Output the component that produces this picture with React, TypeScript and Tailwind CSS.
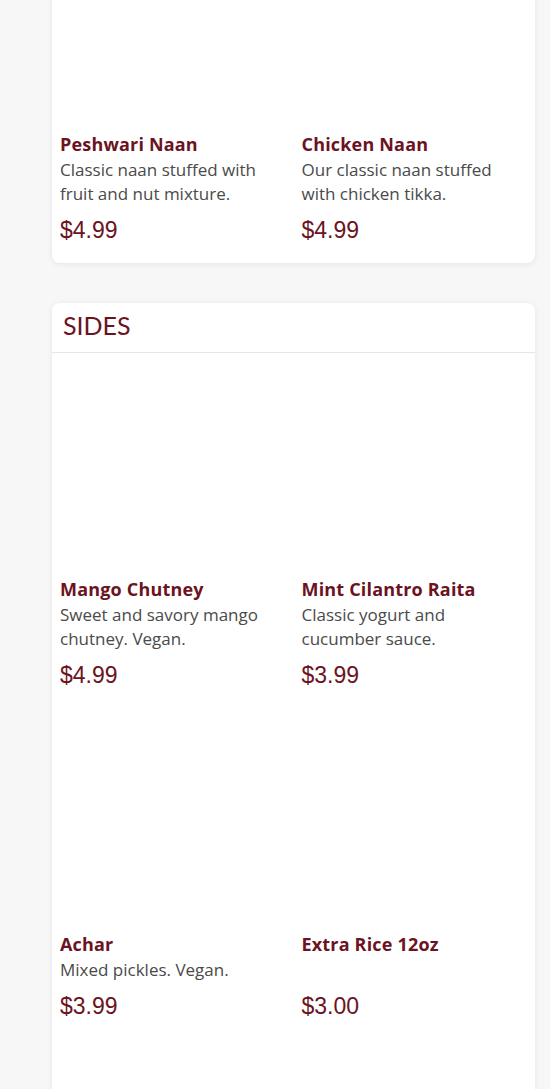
type MenuItem = {
    name: string;
    description?: string;
    price: string;
};

const breads: MenuItem[] = [
    { name: 'Peshwari Naan', description: 'Classic naan stuffed with fruit and nut mixture.', price: '$4.99' },
    { name: 'Chicken Naan', description: 'Our classic naan stuffed with chicken tikka.', price: '$4.99' },
];

const sides: MenuItem[] = [
    { name: 'Mango Chutney', description: 'Sweet and savory mango chutney. Vegan.', price: '$4.99' },
    { name: 'Mint Cilantro Raita', description: 'Classic yogurt and cucumber sauce.', price: '$3.99' },
    { name: 'Achar', description: 'Mixed pickles. Vegan.', price: '$3.99' },
    { name: 'Extra Rice 12oz', price: '$3.00' },
];

const ItemCard = ({ item }: { item: MenuItem }) => (
    <div className="px-2 pt-2 pb-4">
        <div className="h-[215px] bg-white" />
        <h3 className="text-[18px] leading-[27px] font-bold text-[#6b1322] tracking-[0.01em]">{item.name}</h3>
        <p className="min-h-6 pr-3 text-[17px] leading-6 text-[#4a4a4a]">{item.description}</p>
        <p className="mt-2 text-[23px] leading-[33px] text-[#6b1322] font-['Liberation_Sans',Arial,sans-serif]">
            {item.price}
        </p>
    </div>
);

export default function App() {
    return (
        <div className="h-[1089px] w-full overflow-hidden bg-[#f7f7f7] font-['Open_Sans',sans-serif]">
            <div className="-mt-[92px] flex flex-col gap-10 pl-[52px] pr-[15px]">
                <section className="rounded-lg bg-white shadow-[0_1px_6px_rgba(0,0,0,0.08)]">
                    <div className="grid grid-cols-2">
                        {breads.map((item) => (
                            <ItemCard key={item.name} item={item} />
                        ))}
                    </div>
                </section>

                <section className="rounded-lg bg-white pb-[80px] shadow-[0_1px_6px_rgba(0,0,0,0.08)]">
                    <div className="flex h-[50px] items-center border-b border-[#e6e6e6] px-[11px] pb-1">
                        <h2 className="text-[25px] leading-none text-[#6b1322] font-['Lato',sans-serif]">SIDES</h2>
                    </div>
                    <div className="grid grid-cols-2">
                        {sides.map((item) => (
                            <ItemCard key={item.name} item={item} />
                        ))}
                    </div>
                </section>
            </div>
        </div>
    );
}
